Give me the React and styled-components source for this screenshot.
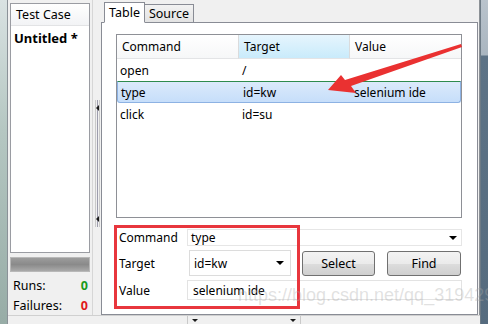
import React from "react";
import styled, { createGlobalStyle } from "styled-components";

const Global = createGlobalStyle`
  html, body { margin: 0; padding: 0; background: #f0f0f0; }
  body { font-family: "Noto Sans", "Noto Sans CJK SC", sans-serif; font-size: 12px; color: #000; }
`;

const rows = [
  { cmd: "open", target: "/", value: "" },
  { cmd: "type", target: "id=kw", value: "selenium ide", selected: true },
  { cmd: "click", target: "id=su", value: "" },
];

const App = () => {
  return (
    <Window>
      <Global />
      <DesktopEdge />
      <Body>
        <Main>
          <LeftPane>
            <CaseList>
              <CaseHeader>Test Case</CaseHeader>
              <CaseItem>Untitled *</CaseItem>
            </CaseList>
            <Progress />
            <Stats>
              <Stat>
                <span>Runs:</span>
                <Count $color="#1a9a1a">0</Count>
              </Stat>
              <Stat>
                <span>Failures:</span>
                <Count $color="#e01818">0</Count>
              </Stat>
            </Stats>
          </LeftPane>
          <VSplitter>
            <VGrip>
              <ArrowLeft />
              <ArrowLeft />
            </VGrip>
          </VSplitter>
          <RightPane>
            <Tabs>
              <Tab $active>Table</Tab>
              <Tab>Source</Tab>
            </Tabs>
            <Panel>
              <Grid>
                <HeadCell>Command</HeadCell>
                <HeadCell $sorted>Target</HeadCell>
                <HeadCell>Value</HeadCell>
                {rows.map((r) => (
                  <Row key={r.cmd} $selected={r.selected}>
                    <Cell>{r.cmd}</Cell>
                    <Cell>{r.target}</Cell>
                    <Cell>{r.value}</Cell>
                  </Row>
                ))}
              </Grid>
              <Form>
                <FormRow $h={17}>
                  <Label>Command</Label>
                  <Combo>
                    type
                    <Caret />
                  </Combo>
                </FormRow>
                <FormRow $h={26}>
                  <Label>Target</Label>
                  <Select>
                    id=kw
                    <Caret />
                  </Select>
                  <Button>Select</Button>
                  <Button>Find</Button>
                </FormRow>
                <FormRow $h={20}>
                  <Label>Value</Label>
                  <Input>selenium ide</Input>
                </FormRow>
              </Form>
              <Highlight />
            </Panel>
          </RightPane>
          <RightGap />
        </Main>
        <BottomBar>
          <HGrip>
            <ArrowDown />
            <ArrowDown />
          </HGrip>
        </BottomBar>
      </Body>
      <RightEdge />
      <Pointer viewBox="0 0 488 324">
        <polygon points="328,90 341,75 345,80 461,44 462,47 351,86 356,93" fill="#ea3131" />
      </Pointer>
      <Watermark>https://blog.csdn.net/qq_31942921</Watermark>
    </Window>
  );
};
export default App;

const Window = styled.div`
  position: relative;
  width: 488px;
  height: 324px;
  display: flex;
  overflow: hidden;
  background: #f0f0f0;
`;

const DesktopEdge = styled.div`
  width: 8px;
  flex: none;
  background: linear-gradient(180deg, #d9e2e2 0%, #b5c7c2 40%, #97aca6 100%);
  border-right: 1px solid #8b9298;
  box-sizing: border-box;
`;

const RightEdge = styled.div`
  width: 7px;
  flex: none;
  border-left: 1px solid #6c7a85;
  background: linear-gradient(180deg, #b9c3cc 0px, #aab6c0 55px, #5d7386 56px, #556b7e 100%);
`;

const Body = styled.div`
  flex: 1;
  display: flex;
  flex-direction: column;
`;

const Main = styled.div`
  flex: 1;
  display: flex;
`;

const LeftPane = styled.div`
  width: 84px;
  flex: none;
  padding: 3px 2px 0 2px;
  box-sizing: border-box;
  display: flex;
  flex-direction: column;
`;

const CaseList = styled.div`
  height: 250px;
  background: #fff;
  border: 1px solid #9a9ca2;
  box-sizing: border-box;
`;

const CaseHeader = styled.div`
  height: 22px;
  line-height: 21px;
  padding-left: 5px;
  font-size: 12.5px;
  background: linear-gradient(180deg, #ffffff, #f2f3f5);
  border-bottom: 1px solid #e2e3e5;
  box-sizing: border-box;
`;

const CaseItem = styled.div`
  padding: 3px 0 0 3px;
  font-weight: bold;
  font-size: 13px;
`;

const Progress = styled.div`
  margin-top: 4px;
  height: 15px;
  background: linear-gradient(180deg, #9c9c9c, #8a8a8a 50%, #a9a9a9);
  border: 1px solid #b8b8b8;
  box-sizing: border-box;
`;

const Stats = styled.div`
  margin-top: 3px;
  display: flex;
  flex-direction: column;
`;

const Stat = styled.div`
  display: flex;
  justify-content: space-between;
  align-items: center;
  height: 20px;
  padding: 0 2px 0 3px;
  font-size: 12.5px;
`;

const Count = styled.span`
  color: ${(p) => p.$color};
  font-weight: bold;
`;

const VSplitter = styled.div`
  width: 9px;
  flex: none;
  border-left: 1px solid #d6d6d6;
  box-sizing: border-box;
  display: flex;
  justify-content: center;
`;

const VGrip = styled.div`
  margin-top: 100px;
  height: 127px;
  width: 5px;
  border-left: 1px solid #c9c9c9;
  border-right: 1px solid #c9c9c9;
  background: linear-gradient(#4a4a6a 50%, transparent 50%) center / 1px 2px repeat-y;
  display: flex;
  flex-direction: column;
  justify-content: space-between;
  align-items: center;
  padding: 5px 0;
  box-sizing: border-box;
`;

const ArrowLeft = styled.div`
  width: 0;
  height: 0;
  border-top: 3px solid transparent;
  border-bottom: 3px solid transparent;
  border-right: 3px solid #1a1a1a;
`;

const RightPane = styled.div`
  width: 377px;
  flex: none;
  display: flex;
  flex-direction: column;
`;

const Tabs = styled.div`
  height: 22px;
  display: flex;
  align-items: flex-end;
  padding-left: 3px;
  position: relative;
  z-index: 1;
`;

const Tab = styled.div`
  height: ${(p) => (p.$active ? 21 : 18)}px;
  line-height: ${(p) => (p.$active ? 19 : 17)}px;
  padding: 0 4px;
  font-size: 12.5px;
  border: 1px solid #898c95;
  border-bottom: ${(p) => (p.$active ? "1px solid #fff" : "none")};
  margin-bottom: ${(p) => (p.$active ? -1 : 0)}px;
  border-left: ${(p) => (p.$active ? "1px solid #898c95" : "none")};
  background: ${(p) => (p.$active ? "#fff" : "linear-gradient(180deg, #f2f2f2, #e3e3e3)")};
  box-sizing: border-box;
`;

const Panel = styled.div`
  position: relative;
  flex: 1;
  background: #fff;
  border: 1px solid #898c95;
  padding: 11px 13px 0 14px;
  box-sizing: border-box;
`;

const Grid = styled.div`
  width: 346px;
  height: 184px;
  border: 1px solid #8e9096;
  box-sizing: border-box;
  display: grid;
  grid-template-columns: 122px 111px 1fr;
  grid-auto-rows: min-content;
`;

const HeadCell = styled.div`
  height: 24px;
  line-height: 24px;
  padding-left: 5px;
  border-right: 1px solid #dadbdc;
  border-bottom: 1px solid #e3e4e6;
  background: ${(p) =>
    p.$sorted ? "linear-gradient(180deg, #e6f5fd, #c9ebfb)" : "linear-gradient(180deg, #ffffff, #f6f7f8)"};
  box-sizing: border-box;
  &:nth-child(3) {
    border-right: none;
  }
`;

const Row = styled.div`
  grid-column: 1 / -1;
  display: grid;
  grid-template-columns: 122px 111px 1fr;
  height: 22px;
  align-items: center;
  box-sizing: border-box;
  ${(p) =>
    p.$selected &&
    `
    background: linear-gradient(180deg, #dbeafb, #c6defa);
    border: 1px solid #8db2e3;
    border-top: 1px solid #2e8b4e;
    border-radius: 0 0 3px 3px;
  `}
`;

const Cell = styled.div`
  padding-left: 3px;
  white-space: nowrap;
`;

const Form = styled.div`
  margin-top: 11px;
  padding-left: 3px;
  display: flex;
  flex-direction: column;
  gap: 4px;
`;

const FormRow = styled.div`
  height: ${(p) => p.$h}px;
  display: flex;
  align-items: center;
`;

const Label = styled.div`
  width: 68px;
  flex: none;
`;

const Combo = styled.div`
  width: 275px;
  height: 17px;
  border: 1px solid #e6e6e6;
  box-sizing: border-box;
  padding-left: 3px;
  display: flex;
  align-items: center;
  justify-content: space-between;
  padding-right: 4px;
`;

const Select = styled.div`
  width: 102px;
  height: 26px;
  margin-left: 2px;
  border: 1px solid #dcdcdc;
  box-sizing: border-box;
  padding: 0 6px 0 4px;
  display: flex;
  align-items: center;
  justify-content: space-between;
`;

const Caret = styled.div`
  width: 0;
  height: 0;
  border-left: 4px solid transparent;
  border-right: 4px solid transparent;
  border-top: 4px solid #000;
`;

const Button = styled.div`
  width: 73px;
  height: 25px;
  margin-left: 11px;
  border: 1px solid #707070;
  border-radius: 3px;
  box-sizing: border-box;
  background: linear-gradient(180deg, #f3f3f3 0%, #ebebeb 50%, #dddddd 51%, #cfcfcf 100%);
  display: flex;
  align-items: center;
  justify-content: center;
  font-size: 12.5px;
  & + & {
    margin-left: 12px;
    width: 74px;
  }
`;

const Input = styled.div`
  width: 275px;
  height: 20px;
  border: 1px solid #e3e3e3;
  box-sizing: border-box;
  padding-left: 5px;
  display: flex;
  align-items: center;
`;

const Highlight = styled.div`
  position: absolute;
  left: 12px;
  top: 202px;
  width: 186px;
  height: 84px;
  border: 3px solid #e8363d;
  box-sizing: border-box;
  pointer-events: none;
`;

const RightGap = styled.div`
  flex: 1;
  border-right: 1px solid #8c9196;
`;

const BottomBar = styled.div`
  height: 11px;
  flex: none;
  display: flex;
  padding-left: 179px;
  border-top: 1px solid #d0d0d0;
  box-sizing: border-box;
`;

const HGrip = styled.div`
  width: 114px;
  height: 100%;
  border-left: 1px solid #c9c9c9;
  border-right: 1px solid #c9c9c9;
  box-sizing: border-box;
  padding: 0 4px;
  display: flex;
  justify-content: space-between;
  align-items: flex-end;
  background: linear-gradient(90deg, #4a4a6a 50%, transparent 50%) 0 8px / 2px 1px repeat-x;
`;

const ArrowDown = styled.div`
  margin-bottom: 4px;
  width: 0;
  height: 0;
  border-left: 3px solid transparent;
  border-right: 3px solid transparent;
  border-top: 3px solid #1a1a1a;
`;

const Pointer = styled.svg`
  position: absolute;
  left: 0;
  top: 0;
  width: 488px;
  height: 324px;
  pointer-events: none;
`;

const Watermark = styled.div`
  position: absolute;
  left: 238px;
  top: 285px;
  font-family: "Liberation Sans", Arial, sans-serif;
  font-size: 18px;
  color: rgba(170, 170, 170, 0.35);
  white-space: nowrap;
  pointer-events: none;
`;
